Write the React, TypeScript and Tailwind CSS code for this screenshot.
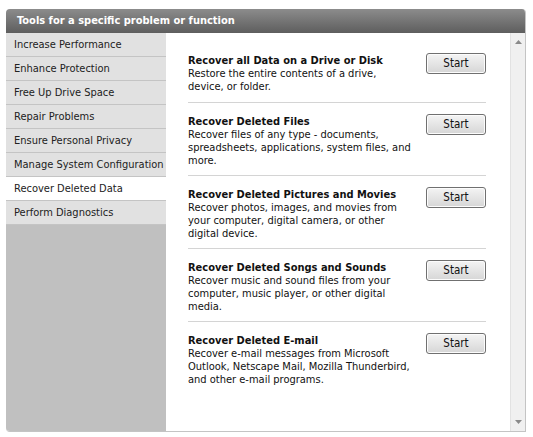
const font = { fontFamily: '"DejaVu Sans Condensed", "DejaVu Sans", sans-serif' };

const menu = [
	"Increase Performance",
	"Enhance Protection",
	"Free Up Drive Space",
	"Repair Problems",
	"Ensure Personal Privacy",
	"Manage System Configuration",
	"Recover Deleted Data",
	"Perform Diagnostics",
];

const tools = [
	{
		title: "Recover all Data on a Drive or Disk",
		lines: ["Restore the entire contents of a drive,", "device, or folder."],
	},
	{
		title: "Recover Deleted Files",
		lines: [
			"Recover files of any type - documents,",
			"spreadsheets, applications, system files, and",
			"more.",
		],
	},
	{
		title: "Recover Deleted Pictures and Movies",
		lines: [
			"Recover photos, images, and movies from",
			"your computer, digital camera, or other",
			"digital device.",
		],
	},
	{
		title: "Recover Deleted Songs and Sounds",
		lines: [
			"Recover music and sound files from your",
			"computer, music player, or other digital",
			"media.",
		],
	},
	{
		title: "Recover Deleted E-mail",
		lines: [
			"Recover e-mail messages from Microsoft",
			"Outlook, Netscape Mail, Mozilla Thunderbird,",
			"and other e-mail programs.",
		],
	},
];

export default function App() {
	return (
		<div className="w-[533px] h-[437px] bg-white pt-[9px] pl-[6px]" style={font}>
			<div className="w-[520px] h-[423px] flex flex-col rounded-t-[4px] rounded-bl-[4px] overflow-hidden border-b border-r border-[#c4c4c4]">
				<div className="h-[24px] shrink-0 bg-gradient-to-b from-[#8c8c8c] to-[#5e5e5e] text-white font-bold text-[11px] pl-[11px] pt-[1px] flex items-center">
					Tools for a specific problem or function
				</div>
				<div className="flex flex-1 min-h-0">
					<div className="w-[160px] shrink-0 bg-[#c0c0c0] text-[11px] text-[#222]">
						{menu.map((m) => (
							<div
								key={m}
								className={`h-[24px] pl-[8px] pt-[2px] flex items-center border-b border-[#c4c4c4] ${m === "Recover Deleted Data" ? "bg-white" : "bg-[#e1e1e1]"}`}
							>
								{m}
							</div>
						))}
					</div>
					<div className="flex-1 bg-white pl-[22px] pr-[24px] pt-[21px] text-[11px] text-[#111]">
						{tools.map((t, i) => (
							<div
								key={t.title}
								className={`flex justify-between ${i === 0 ? "h-[49px] pt-0" : "h-[73px] pt-[12px]"} ${i < tools.length - 1 ? "border-b border-[#d4d4d4]" : ""}`}
							>
								<div className="leading-[13px] whitespace-nowrap">
									<div className="font-bold">{t.title}</div>
									{t.lines.map((l) => (
										<div key={l}>{l}</div>
									))}
								</div>
								<button
									type="button"
									className="w-[60px] h-[21px] mt-[-1px] rounded-[3px] border border-[#707070] bg-gradient-to-b from-[#f4f4f4] to-[#d6d6d6] text-[11.5px] text-[#111] shadow-[inset_0_0_0_1px_#fcfcfc]"
								>
									Start
								</button>
							</div>
						))}
					</div>
					<div className="w-[15px] shrink-0 bg-[#f0f0f0] border-l border-[#e2e2e2] flex flex-col justify-between items-center py-[7px]">
						<svg width="7" height="4" viewBox="0 0 7 4">
							<path d="M3.5 0 L7 4 L0 4 Z" fill="#8a8a8a" />
						</svg>
						<svg width="7" height="4" viewBox="0 0 7 4">
							<path d="M0 0 L7 0 L3.5 4 Z" fill="#8a8a8a" />
						</svg>
					</div>
				</div>
			</div>
		</div>
	);
}
